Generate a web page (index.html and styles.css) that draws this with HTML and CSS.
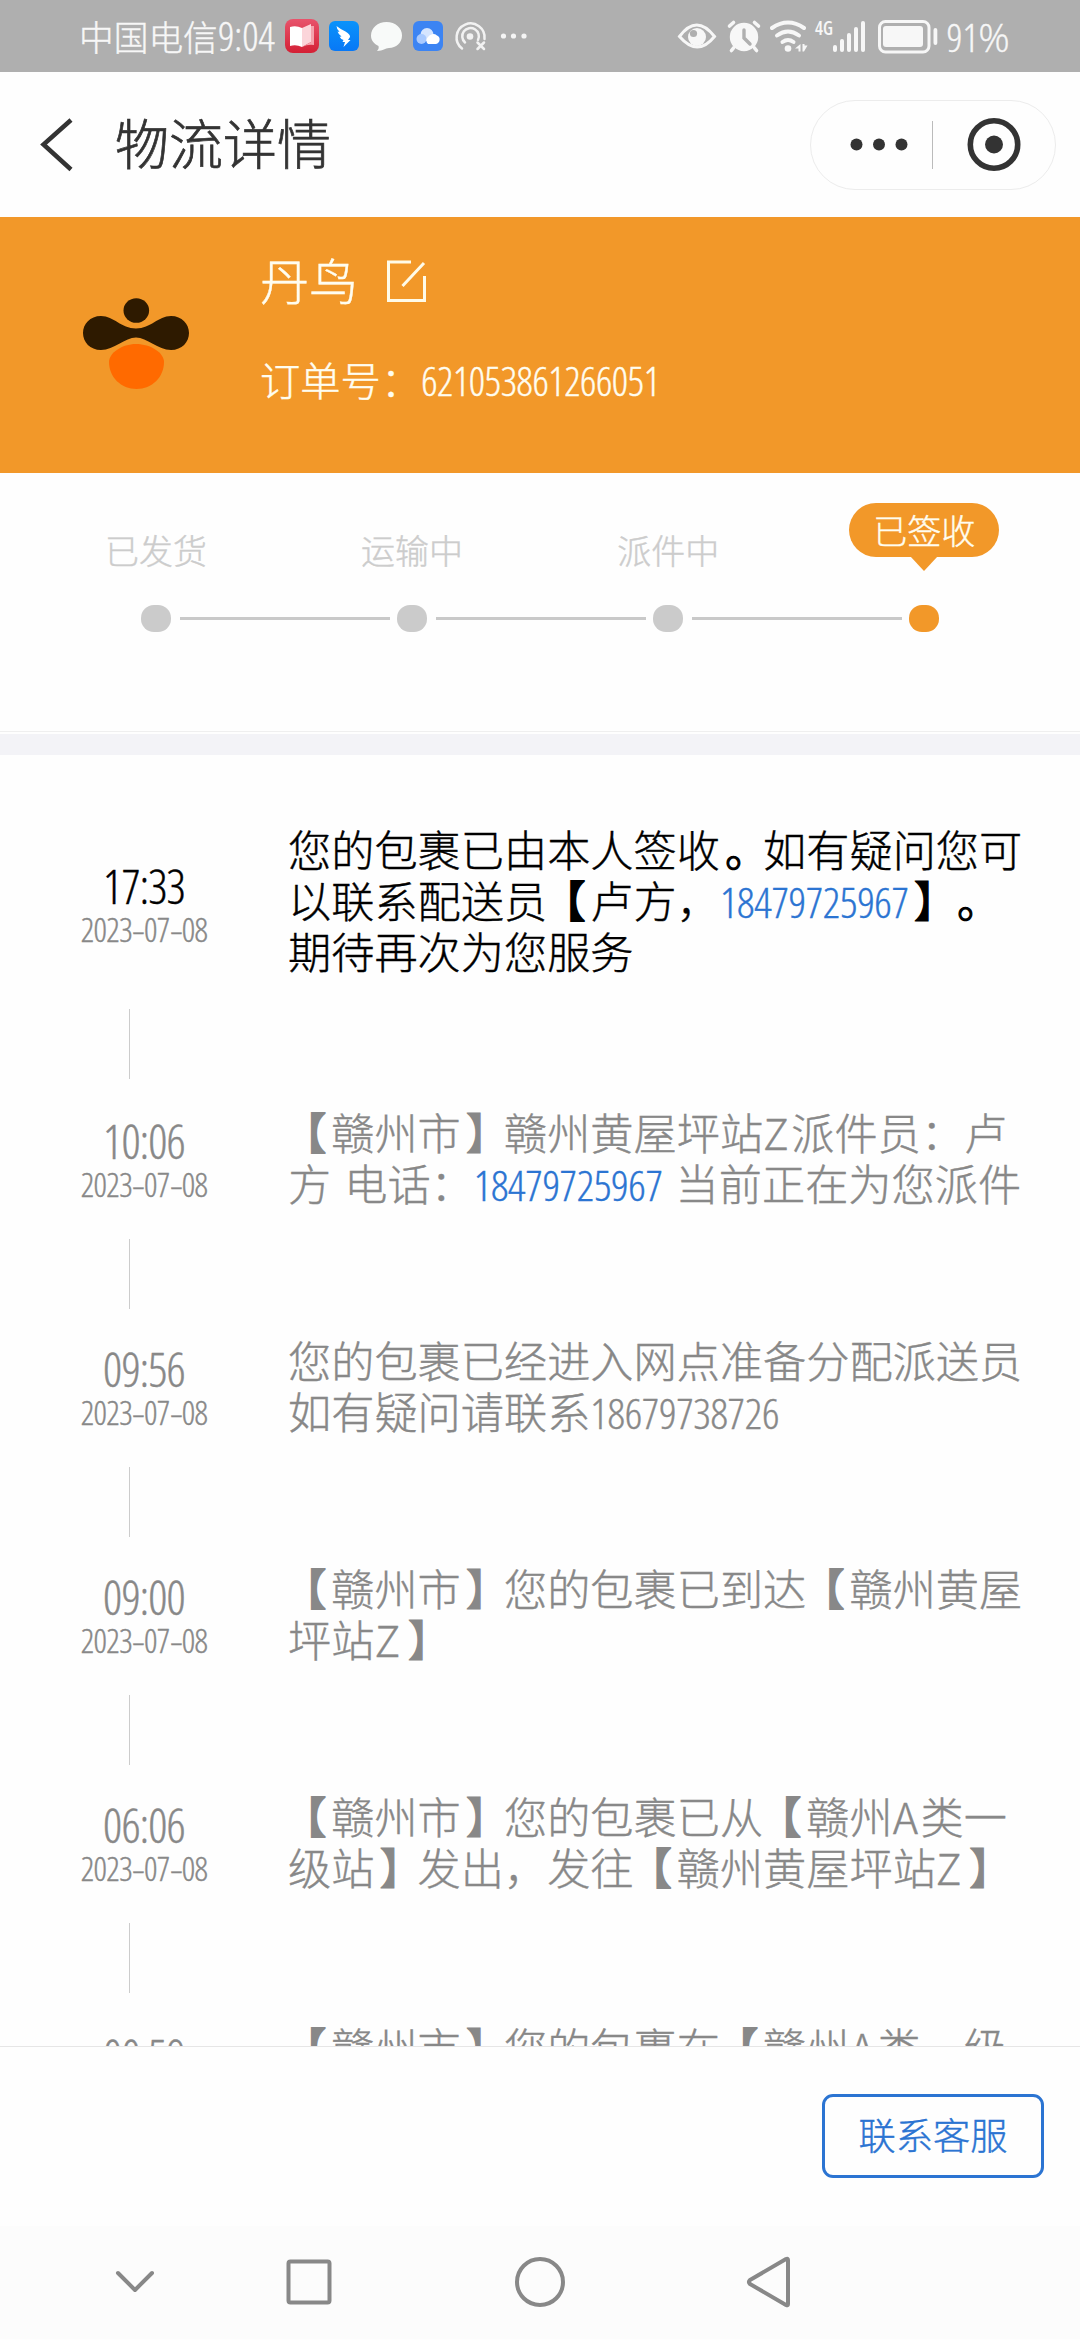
FILE: index.html
```html
<!DOCTYPE html>
<html lang="zh-CN">
<head>
<meta charset="utf-8">
<title>物流详情</title>
<link rel="stylesheet" href="styles.css">
</head>
<body>
<div class="screen">
  <div class="status">
    <span class="carrier">中国电信</span>
    <span class="clock">9:04</span>
    <svg class="st-left" width="250" height="40" viewBox="280 16 250 40">
      <defs>
        <linearGradient id="red" x1="0" y1="0" x2="0" y2="1"><stop offset="0" stop-color="#e8546c"/><stop offset="1" stop-color="#d42035"/></linearGradient>
        <linearGradient id="blue" x1="0" y1="0" x2="0" y2="1"><stop offset="0" stop-color="#0a93fb"/><stop offset="1" stop-color="#0878f6"/></linearGradient>
      </defs>
      <rect x="285" y="19" width="34" height="34" rx="8" fill="url(#red)"/>
      <path d="M290 27q6-2 12 1v19q-6-3-12-1z" fill="#fff"/>
      <path d="M302 28l9-4v18l-9 5z" fill="#fbd5da"/>
      <path d="M311 26h3v19q-6-1-12 2l9-5z" fill="#f4a3ad"/>
      <rect x="329" y="21" width="30" height="30" rx="6" fill="url(#blue)"/>
      <path d="M336.500 26q3 2.500 9 5.500 5 3 4.500 5.500l-2 3h2.500l-7 7 1.500-5h-2.500l1-2q-3-1-4-3.500 1 .3 2 0-3-2-4-5 1 .5 2 .3-3-2.800-3-5.800z" fill="#fff"/>
      <path d="M386.500 22c9 0 15.500 6 15.500 13.500s-6 12.500-13 12.500c-4 0-5.500 3-12 3 1.500-1.500 2-3 1.500-5-5-2.500-7.500-6-7.500-10.500 0-7.500 6.500-13.500 15.500-13.500z" fill="#f8faf9"/>
      <rect x="413" y="21" width="30" height="30" rx="6" fill="#3c84f3"/>
      <circle cx="427" cy="34.500" r="6.500" fill="#d5e5ff"/><circle cx="421.500" cy="39" r="5" fill="#a9caff"/>
      <path d="M428 44a4.500 4.500 0 0 1 0-7 6 6 0 0 1 9-1.500 4.500 4.500 0 0 1-1 8.500z" fill="#fff"/>
      <g fill="none" stroke="#f2f2f2" stroke-width="2.500" stroke-linecap="round">
        <path d="M462 48.500a14 14 0 1 1 22.500-9.500"/>
        <path d="M465 42.500a8.300 8.300 0 1 1 13-2.500"/>
        <path d="M477.500 42.500l6.500 6.500M484 42.500l-6.500 6.500"/>
      </g>
      <circle cx="470" cy="36.500" r="3.300" fill="#f2f2f2"/>
      <g fill="#f5f5f5"><circle cx="503.500" cy="36" r="2.600"/><circle cx="513.500" cy="36" r="2.600"/><circle cx="524" cy="36" r="2.600"/></g>
    </svg>
    <svg class="st-right" width="264" height="40" viewBox="676 16 264 40" fill="#f7f7f7">
      <path d="M678.500 36.500q17-23 35 0q-17 21-35 0z" fill="none" stroke="#f7f7f7" stroke-width="3"/>
      <circle cx="696" cy="37" r="9"/><circle cx="692.500" cy="33.500" r="3.600" fill="#afafaf"/>
      <circle cx="743" cy="37" r="14.200"/>
      <path d="M728.500 26l4-3.500M757.500 26l-4-3.500M732.500 48l-2 2.500M753.500 48l2 2.500" stroke="#f7f7f7" stroke-width="3.600" stroke-linecap="round"/>
      <path d="M743 30v8l6 6" fill="none" stroke="#afafaf" stroke-width="3.400" stroke-linecap="round"/>
      <g fill="none" stroke="#f7f7f7" stroke-width="4" stroke-linecap="round"><path d="M771 28q16-11 32 0"/><path d="M776 35.500q11-8 22 0"/><path d="M781.500 42q5.500-4 11 0"/></g>
      <circle cx="787" cy="48.500" r="3.300"/>
      <path d="M799.500 44v7.500h-2v-3h-3.500zM801.500 44v7.500h1.500l3.500-6h-3v-1.500z"/>
      <text class="net" x="814" y="34.500" textLength="18" lengthAdjust="spacingAndGlyphs">4G</text>
      <rect x="832" y="45" width="4" height="7" rx="2"/><rect x="839" y="39" width="4" height="13" rx="2"/><rect x="846" y="33" width="4" height="19" rx="2"/><rect x="853" y="27" width="4" height="25" rx="2"/><rect x="860" y="21" width="4" height="31" rx="2"/>
      <rect x="878.500" y="21.500" width="49.500" height="30.500" rx="6" fill="none" stroke="#f7f7f7" stroke-width="3"/>
      <rect x="882" y="26" width="40" height="21" rx="3"/><rect x="932.500" y="28" width="3.800" height="17" rx="1.900"/>
    </svg>
    <span class="battery">91<i>%</i></span>
  </div>

  <header class="header">
    <svg class="back" width="34" height="54" viewBox="39 117 34 54" fill="none" stroke="#333" stroke-width="4.500"><path d="M71 119L43.500 143.500 71 168.500"/></svg>
    <h1 class="title">物流详情</h1>
    <div class="capsule">
      <svg width="46" height="14" viewBox="0 0 46 14" fill="#333"><circle cx="7.500" cy="6.500" r="6"/><circle cx="30" cy="6.500" r="6"/><circle cx="52.500" cy="6.500" r="6"/></svg>
      <i class="bar"></i>
      <svg width="54" height="54" viewBox="0 0 54 54"><circle cx="27" cy="26.500" r="23.700" fill="none" stroke="#333" stroke-width="5.600"/><circle cx="27" cy="26.500" r="9" fill="#333"/></svg>
    </div>
  </header>

  <section class="banner">
    <svg class="logo" width="108" height="94" viewBox="82 297 108 94">
      <ellipse cx="136.300" cy="310.500" rx="12.800" ry="12.300" fill="#2e1a00"/>
      <path d="M101 316c13 0 20 12.500 35 12.500s22-12.500 35-12.500c11 0 18 8 18 17s-7 17-18 17c-13 0-24-12.500-35-12.500s-22 12.500-35 12.500c-11 0-18-8-18-17s7-17 18-17z" fill="#2e1a00"/>
      <path d="M136 344c15 0 28 9 28 18 0 15-12 27-27.500 27S109 377 109 362c0-9 13-18 27-18z" fill="#ff6a00"/>
    </svg>
    <div class="info">
      <div class="name">丹鸟
        <svg width="42" height="46" viewBox="386 258 42 46" fill="none" stroke="#fffbe8" stroke-width="3"><path d="M411 262H388.500V300.500H424.500V276M424 263L402.500 286"/></svg>
      </div>
      <div class="order">订单号：<span class="num">621053861266051</span></div>
    </div>
  </section>

  <section class="steps">
    <div class="step"><span class="label">已发货</span><i class="dot"></i></div>
    <i class="line"></i>
    <div class="step"><span class="label">运输中</span><i class="dot"></i></div>
    <i class="line"></i>
    <div class="step"><span class="label">派件中</span><i class="dot"></i></div>
    <i class="line"></i>
    <div class="step on"><span class="label">已签收</span><i class="dot"></i></div>
  </section>
  <div class="gap"></div>

  <main class="track">
    <article class="item latest">
      <div class="when"><b>17:33</b><small>2023<i>-</i>07<i>-</i>08</small></div>
      <p>您的包裹已由本人签收<i class="r">。</i>如有疑问您可<br>以联系配送员<i class="l">【</i>卢方，<a class="num">18479725967</a><i class="r">】</i><i class="r">。</i><br>期待再次为您服务</p>
    </article>
    <article class="item">
      <div class="when"><b>10:06</b><small>2023<i>-</i>07<i>-</i>08</small></div>
      <p><i class="l">【</i>赣州市<i class="r">】</i>赣州黄屋坪站<i class="w">Z</i>派件员：卢<br>方<s></s>电话：<a class="num">18479725967</a><s></s>当前正在为您派件</p>
    </article>
    <article class="item">
      <div class="when"><b>09:56</b><small>2023<i>-</i>07<i>-</i>08</small></div>
      <p>您的包裹已经进入网点准备分配派送员<br>如有疑问请联系<span class="num">18679738726</span></p>
    </article>
    <article class="item">
      <div class="when"><b>09:00</b><small>2023<i>-</i>07<i>-</i>08</small></div>
      <p><i class="l">【</i>赣州市<i class="r">】</i>您的包裹已到达<i class="l">【</i>赣州黄屋<br>坪站<i class="w">Z</i><i class="r">】</i></p>
    </article>
    <article class="item">
      <div class="when"><b>06:06</b><small>2023<i>-</i>07<i>-</i>08</small></div>
      <p><i class="l">【</i>赣州市<i class="r">】</i>您的包裹已从<i class="l">【</i>赣州<i class="w">A</i>类一<br>级站<i class="r">】</i>发出，发往<i class="l">【</i>赣州黄屋坪站<i class="w">Z</i><i class="r">】</i></p>
    </article>
    <article class="item">
      <div class="when"><b>00:59</b></div>
      <p><i class="l">【</i>赣州市<i class="r">】</i>您的包裹在<i class="l">【</i>赣州<i class="w">A</i>类一级</p>
    </article>
  </main>

  <footer class="footer"><button class="service">联系客服</button></footer>
  <nav class="nav">
    <svg width="1080" height="114" viewBox="0 2226 1080 114" fill="none" stroke="#888" stroke-width="4" stroke-linejoin="round" stroke-linecap="round">
      <path d="M118 2273L135 2290 152 2273"/>
      <rect x="288.500" y="2261.500" width="41" height="41" rx="2"/>
      <circle cx="540" cy="2282" r="23"/>
      <path d="M788 2260V2304Q788 2306 786 2305L750 2284Q748 2282 750 2280L786 2259Q788 2258 788 2260Z"/>
    </svg>
  </nav>
</div>
</body>
</html>
```
FILE: styles.css
```css
* { box-sizing: border-box; margin: 0; padding: 0; }
body {
  width: 1080px; height: 2340px; overflow: hidden; background: #fefefe;
  font-family: "Noto Sans CJK SC", sans-serif; font-weight: 300;
  text-spacing-trim: space-all;
  -webkit-text-stroke: .4px currentColor;
}
i { font-style: normal; }
svg { display: block; flex: none; }
.screen { width: 1080px; height: 2340px; display: flex; flex-direction: column; overflow: hidden; }
.screen > * { flex: none; }

.status { height: 72px; background: #afafaf; color: #f7f7f7; display: flex; align-items: center; padding-left: 79px; }
.carrier { width: 138px; font-size: 34.7px; line-height: 72px; white-space: nowrap; }
.clock, .battery, .num, .when { font-family: "Open Sans", sans-serif; font-stretch: 75%; font-weight: 300; }
.clock { width: 63px; font-size: 40px; line-height: 72px; padding-left: 1px; }
.st-right { margin-left: 146.5px; }
.battery { font-size: 39px; margin-left: 6px; white-space: nowrap; }
.battery i { font-stretch: 92%; }
.net { font: 600 20px "Open Sans", sans-serif; font-stretch: 75%; }

.header { height: 145px; display: flex; align-items: center; padding: 0 24px 0 39px; }
.title { margin: -5px 0 0 42px; font-size: 54px; font-weight: 300; line-height: 72px; color: #333; -webkit-text-stroke: .7px #333; }
.capsule { margin-left: auto; width: 246px; height: 90px; border: 1.500px solid #ececec; border-radius: 45px; display: flex; align-items: center; padding-left: 38px; }
.capsule svg { overflow: visible; }
.bar { width: 1px; height: 48px; background: #bbb; margin: 0 34px 0 37px; }

.banner { height: 256px; background: #f29829; color: #fffdf0; display: flex; padding-left: 82px; }
.logo { margin-top: 80px; }
.info { margin-left: 70px; }
.name { display: flex; align-items: center; gap: 28px; height: 80px; margin-top: 21px; font-size: 49px; }
.name svg { margin-top: 6px; }
.order { height: 60px; line-height: 60px; font-size: 40.300px; margin-top: 31px; }
.order .num { font-size: 40px; letter-spacing: -.4px; }

.steps { height: 259px; display: flex; padding: 30px 0 0 60px; border-bottom: 1px solid #efefef; }
.step { width: 192px; height: 132px; display: flex; flex-direction: column; align-items: center; margin-right: -72px; }
.label { height: 54px; line-height: 54px; margin-top: 20px; font-size: 34px; color: #ccc; }
.dot { width: 30px; height: 27px; border-radius: 13px; background: #cbcbcb; margin-top: 28px; }
.line { width: 210px; height: 3px; background: #c9c9c9; margin-top: 114px; margin-right: -73.900px; }
.on .label { position: relative; width: 150px; margin: 0 0 20px; line-height: 53px; border-radius: 27px; background: #f29829; color: #fffdf0; text-align: center; }
.on .label::after { content: ""; position: absolute; left: 61px; top: 53px; border: 14px solid transparent; border-top: 15px solid #f29829; border-bottom: 0; }
.on .dot { background: #f29829; }
.gap { height: 21px; margin-top: 2px; background: #f3f3f7; }

.track { height: 1291px; padding-top: 68px; overflow: hidden; }
.item { position: relative; display: flex; align-items: center; height: 102px; margin-bottom: 126px; color: #888; }
.item::after { content: ""; position: absolute; left: 129px; bottom: -101px; width: 1px; height: 70px; background: #ccc; }
.item.latest { height: 153px; margin-bottom: 130px; }
.item.latest::after { bottom: -103px; }
.item p { font-size: 43.200px; line-height: 51px; white-space: nowrap; }
.item .l { display: inline-block; width: 43.200px; height: 51px; vertical-align: top; text-indent: -5px; -webkit-text-stroke-width: 2px; }
.item .r { display: inline-block; width: 43.200px; height: 51px; vertical-align: top; text-indent: 5px; -webkit-text-stroke-width: 1.200px; }
.item .w { letter-spacing: 2.500px; }
.item:last-child { align-items: flex-start; padding-top: 3px; }
.when { width: 288px; flex: none; text-align: center; padding-top: 8px; }
.when b { display: block; font-weight: 300; font-size: 47px; line-height: 48px; letter-spacing: -.8px; }
.when small { display: block; font-size: 33px; line-height: 40px; letter-spacing: -.6px; }
.when small i { display: inline-block; width: 12px; transform: scaleX(1.4); }
.latest p, .latest b { color: #000; }
.latest .when { padding-top: 12px; }
.item:last-child .when { padding-top: 11px; }
.item .num { font-size: 43px; letter-spacing: -.35px; line-height: 1; }
.item a { color: #2b74d2; }
.item s { display: inline-block; width: 13px; }

.footer { height: 180px; border-top: 1px solid #e6e6e6; display: flex; justify-content: flex-end; padding: 47px 36px 0 0; }
.service { width: 222px; height: 84px; border: 3px solid #2b74d2; border-radius: 11px; background: none; color: #2b74d2; font: 300 37.300px "Noto Sans CJK SC", sans-serif; padding-bottom: 4px; -webkit-text-stroke: .4px #2b74d2; }
.nav { height: 113px; background: #fcfcfc; }
```
